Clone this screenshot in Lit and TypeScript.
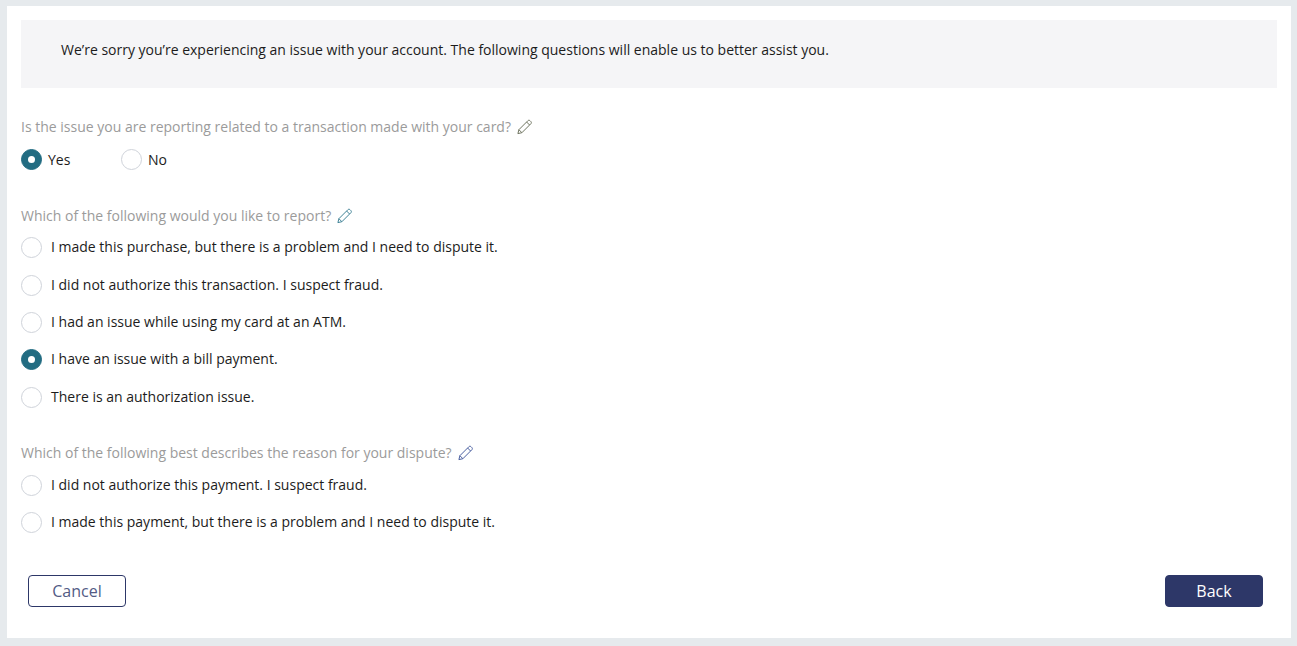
import { LitElement, html, css, svg } from "lit";
import { customElement } from "lit/decorators.js";

const pencil = svg`<path d="M0.9 14.6 L1.9 10.7 L10.9 1.7 C11.5 1.1 12.4 1.1 13 1.7 L13.9 2.6 C14.5 3.2 14.5 4.1 13.9 4.7 L4.9 13.7 Z M9.6 3 L12.6 6 M1.9 10.7 L4.9 13.7" />`;

@customElement("app-root")
export class AppRoot extends LitElement {
  static styles = css`
    :host {
      display: block;
      height: 646px;
      box-sizing: border-box;
      padding: 6px 6px 8px 7px;
      background: #e6eaed;
      font-family: "Open Sans", sans-serif;
      font-size: 14px;
      color: #1c1c1c;
    }
    .panel {
      height: 632px;
      box-sizing: border-box;
      background: #fff;
      padding: 14px 14px 0;
      display: flex;
      flex-direction: column;
    }
    .info {
      height: 68px;
      box-sizing: border-box;
      background: #f5f5f7;
      padding: 20px 40px 0;
      line-height: 20px;
    }
    .q {
      display: flex;
      align-items: center;
      gap: 6px;
      height: 20px;
      line-height: 20px;
      color: #9b9b9b;
    }
    .q svg {
      width: 15px;
      height: 16px;
      fill: none;
      stroke-width: 1;
      display: block;
    }
    .q1 { margin-top: 29px; }
    .q2 { margin-top: 36.2px; }
    .q3 { margin-top: 35.2px; }
    .inline {
      display: flex;
      margin-top: 12px;
      height: 21px;
    }
    .inline .opt { width: 100px; gap: 6px; align-items: center; }
    .list {
      display: flex;
      flex-direction: column;
      gap: 16.4px;
      margin-top: 11px;
    }
    .q3 + .list { margin-top: 12px; gap: 16px; }
    .opt {
      display: flex;
      align-items: flex-start;
      gap: 9px;
      height: 21px;
      line-height: 20px;
    }
    .radio {
      width: 21px;
      height: 21px;
      box-sizing: border-box;
      border-radius: 50%;
      border: 1px solid #cfd3da;
      background: #fff;
      flex: none;
      display: flex;
      align-items: center;
      justify-content: center;
    }
    .radio.on {
      background: #226c82;
      border-color: #226c82;
    }
    .radio.on::after {
      content: "";
      width: 7px;
      height: 7px;
      border-radius: 50%;
      background: #fff;
    }
    .actions {
      display: flex;
      justify-content: space-between;
      margin-top: 42px;
      padding: 0 14px 0 7px;
    }
    button {
      width: 98px;
      height: 32px;
      box-sizing: border-box;
      border-radius: 4px;
      border: 1px solid #2d3768;
      font: 16px "Open Sans", sans-serif;
      padding: 0;
    }
    .cancel { background: #fff; color: #535b85; }
    .back { background: #2d3768; color: #fff; }
  `;

  private opt(label: string, on = false) {
    return html`<div class="opt"><span class="radio ${on ? "on" : ""}"></span><span>${label}</span></div>`;
  }

  private question(cls: string, text: string, stroke: string) {
    return html`<div class="q ${cls}"><span>${text}</span><svg viewBox="0 0 15 16" stroke=${stroke}>${pencil}</svg></div>`;
  }

  render() {
    return html`<div class="panel">
      <div class="info">We’re sorry you’re experiencing an issue with your account. The following questions will enable us to better assist you.</div>
      ${this.question("q1", "Is the issue you are reporting related to a transaction made with your card?", "#6f7560")}
      <div class="inline">${this.opt("Yes", true)}${this.opt("No")}</div>
      ${this.question("q2", "Which of the following would you like to report?", "#3f8296")}
      <div class="list">
        ${this.opt("I made this purchase, but there is a problem and I need to dispute it.")}
        ${this.opt("I did not authorize this transaction. I suspect fraud.")}
        ${this.opt("I had an issue while using my card at an ATM.")}
        ${this.opt("I have an issue with a bill payment.", true)}
        ${this.opt("There is an authorization issue.")}
      </div>
      ${this.question("q3", "Which of the following best describes the reason for your dispute?", "#4a5fa0")}
      <div class="list">
        ${this.opt("I did not authorize this payment. I suspect fraud.")}
        ${this.opt("I made this payment, but there is a problem and I need to dispute it.")}
      </div>
      <div class="actions">
        <button class="cancel">Cancel</button>
        <button class="back">Back</button>
      </div>
    </div>`;
  }
}
